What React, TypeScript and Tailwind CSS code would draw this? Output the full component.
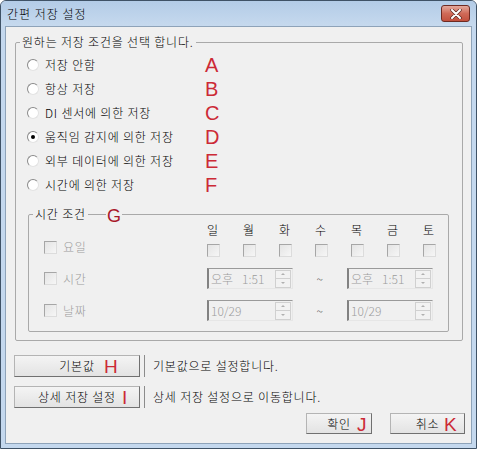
import React from "react";

const RED = "text-[#cc2a36]";

const Radio = ({ checked = false }: { checked?: boolean }) => (
  <span className="w-[12px] h-[12px] rounded-full border border-[#8a8a8a] border-b-[#e2e2e2] border-r-[#e2e2e2] bg-white flex items-center justify-center shrink-0">
    {checked && <span className="w-[4px] h-[4px] rounded-full bg-black" />}
  </span>
);

const Check = () => (
  <span className="w-[13px] h-[13px] border border-[#a6a6a6] border-b-[#dcdcdc] border-r-[#dcdcdc] bg-gradient-to-br from-[#e4e4e4] to-[#f6f6f6] shrink-0" />
);

const Spinner = () => (
  <div className="flex flex-col w-[16px] h-[18px] mr-[1px]">
    <div className="flex-1 border border-[#d0d0d0] bg-[#f2f2f2] flex items-center justify-center">
      <span className="w-0 h-0 border-l-[2px] border-r-[2px] border-b-[2px] border-l-transparent border-r-transparent border-b-[#b0b0b0]" />
    </div>
    <div className="flex-1 border border-[#d0d0d0] border-t-0 bg-[#f2f2f2] flex items-center justify-center">
      <span className="w-0 h-0 border-l-[2px] border-r-[2px] border-t-[2px] border-l-transparent border-r-transparent border-t-[#b0b0b0]" />
    </div>
  </div>
);

const Picker = ({ children }: { children: React.ReactNode }) => (
  <div className="w-[86px] h-[21px] flex items-center justify-between border-t border-l-2 border-[#9a9a9a] border-l-[#828282] border-r border-b border-r-[#e6e6e6] border-b-[#e6e6e6] bg-[#f0f0f0] pl-[2px] text-[#9c9c9c] tracking-normal">
    <span className="flex gap-[9px]">{children}</span>
    <Spinner />
  </div>
);

const Button = ({
  label,
  mark,
  markLeft,
  className,
}: {
  label: string;
  mark: string;
  markLeft: string;
  className: string;
}) => (
  <button
    className={`relative flex items-center justify-center border border-[#b4b4b4] border-b-[#707070] border-r-[#707070] bg-gradient-to-b from-[#f4f4f4] to-[#e3e3e3] text-black ${className}`}
  >
    <span>{label}</span>
    <span
      className={`absolute top-1/2 -translate-y-1/2 font-['Liberation_Sans',sans-serif] text-[19px] leading-none tracking-normal ${RED} ${markLeft}`}
    >
      {mark}
    </span>
  </button>
);

const options = [
  { label: "저장 안함", mark: "A" },
  { label: "항상 저장", mark: "B" },
  { label: "DI 센서에 의한 저장", mark: "C" },
  { label: "움직임 감지에 의한 저장", mark: "D", checked: true },
  { label: "외부 데이터에 의한 저장", mark: "E" },
  { label: "시간에 의한 저장", mark: "F" },
];

const days = ["일", "월", "화", "수", "목", "금", "토"];

export default function App() {
  return (
    <div className="w-[477px] h-[449px] flex flex-col rounded-t-[6px] border border-[#3f5266] bg-[#c4d8ee] overflow-hidden font-['Noto_Sans_CJK_KR','Liberation_Sans',sans-serif] font-light text-[12px] leading-[16px] tracking-[0.8px] text-black">
      {/* title bar */}
      <div className="h-[25px] flex items-center justify-between pl-[6px] pr-[6px] bg-gradient-to-b from-[#b3cce7] to-[#c6d9ee]">
        <span className="text-[12px] tracking-[1px]">간편 저장 설정</span>
        <div className="w-[29px] h-[17px] rounded-[3px] border border-[#6e2a22] bg-gradient-to-b from-[#e3a89c] via-[#cf6a58] to-[#c2503e] flex items-center justify-center">
          <svg width="12" height="10" viewBox="0 0 12 10">
            <path d="M2 1 L10 9 M10 1 L2 9" stroke="#5a2a24" strokeWidth="3.4" strokeLinecap="round" />
            <path d="M2 1 L10 9 M10 1 L2 9" stroke="#ffffff" strokeWidth="2" strokeLinecap="round" />
          </svg>
        </div>
      </div>

      {/* client area */}
      <div className="flex-1 mx-[4px] mb-[4px] border border-[#8ea3b9] bg-[#f0f0f0] flex flex-col">
        <fieldset className="mt-[7px] ml-[9px] mr-[8px] border border-[#a9a9a9] rounded-[2px] pb-[8px]">
          <legend className="ml-[4px] px-[2px]">원하는 저장 조건을 선택 합니다.</legend>

          <div className="flex flex-col pl-[11px] pt-[3px]">
            {options.map((o) => (
              <div key={o.mark} className="h-[24px] flex items-center">
                <div className="w-[178px] flex items-center gap-[6px]">
                  <Radio checked={o.checked} />
                  <span>{o.label}</span>
                </div>
                <span className={`font-['Liberation_Sans',sans-serif] font-normal text-[20px] leading-none tracking-normal ${RED}`}>{o.mark}</span>
              </div>
            ))}
          </div>

          <fieldset className="relative mt-[9px] ml-[12px] mr-[13px] border border-[#a9a9a9] rounded-[2px] pb-[10px]">
            <legend className="ml-[4px] px-[2px]">시간 조건</legend>
            <span className="absolute left-[77px] top-[-15px] font-['Liberation_Sans',sans-serif] font-normal text-[18px] leading-none tracking-normal text-[#a8182a] bg-[#f0f0f0] px-[1px]">
              G
            </span>

            <div className="flex">
              <div className="w-[166px]" />
              <div className="grid grid-cols-7 w-[252px] h-[14px] items-center">
                {days.map((d) => (
                  <span key={d} className="text-center">{d}</span>
                ))}
              </div>
            </div>

            <div className="flex mt-[8px] items-start">
              <div className="w-[166px] pl-[15px] flex items-center gap-[6px] text-[#9c9c9c] -mt-[5px]">
                <Check />
                <span>요일</span>
              </div>
              <div className="grid grid-cols-7 w-[252px] h-[13px]">
                {days.map((d) => (
                  <span key={d} className="flex justify-center">
                    <Check />
                  </span>
                ))}
              </div>
            </div>

            <div className="flex mt-[11px] items-center">
              <div className="w-[166px] pl-[15px] flex items-center gap-[6px] text-[#9c9c9c]">
                <Check />
                <span>시간</span>
              </div>
              <div className="flex items-center ml-[12px]">
                <Picker>
                  <span>오후</span>
                  <span>1:51</span>
                </Picker>
                <span className="w-[54px] text-center text-[#555]">~</span>
                <Picker>
                  <span>오후</span>
                  <span>1:51</span>
                </Picker>
              </div>
            </div>

            <div className="flex mt-[11px] items-center">
              <div className="w-[166px] pl-[15px] flex items-center gap-[6px] text-[#9c9c9c]">
                <Check />
                <span>날짜</span>
              </div>
              <div className="flex items-center ml-[12px]">
                <Picker>
                  <span>10/29</span>
                </Picker>
                <span className="w-[54px] text-center text-[#555]">~</span>
                <Picker>
                  <span>10/29</span>
                </Picker>
              </div>
            </div>
          </fieldset>
        </fieldset>

        <div className="flex flex-col gap-[9px] mt-[14px] ml-[8px]">
          <div className="flex items-center">
            <Button label="기본값" mark="H" markLeft="left-[89px]" className="w-[126px] h-[22px]" />
            <span className="ml-[4px] w-[1px] h-[22px] bg-[#8c8c8c]" />
            <span className="ml-[8px]">기본값으로 설정합니다.</span>
          </div>
          <div className="flex items-center">
            <Button label="상세 저장 설정" mark="I" markLeft="left-[107px]" className="w-[126px] h-[22px]" />
            <span className="ml-[4px] w-[1px] h-[22px] bg-[#8c8c8c]" />
            <span className="ml-[8px]">상세 저장 설정으로 이동합니다.</span>
          </div>
        </div>

        <div className="flex justify-end gap-[18px] mt-[5px] mr-[6px]">
          <Button label="확인" mark="J" markLeft="left-[50px]" className="w-[66px] h-[21px]" />
          <Button label="취소" mark="K" markLeft="left-[53px]" className="w-[75px] h-[21px]" />
        </div>
      </div>
    </div>
  );
}
